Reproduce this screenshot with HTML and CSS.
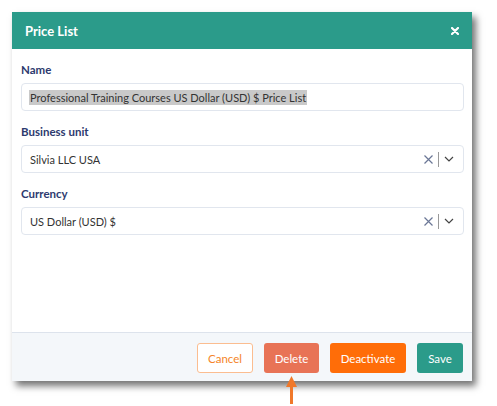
FILE: index.html
```html
<!DOCTYPE html>
<html lang="en">

<head>
    <meta charset="UTF-8">
    <meta name="viewport" content="width=device-width, initial-scale=1.0">
    <link rel="stylesheet" href="styles.css">
    <title>Price List</title>
</head>

<body>
    <div class="dialog">
        <div class="dialog-header">
            <h2>Price List</h2>
            <svg class="close" width="8" height="8" viewBox="0 0 8 8">
                <path d="M1 1 L7 7 M7 1 L1 7" stroke="#fff" stroke-width="2.2" stroke-linecap="round" />
            </svg>
        </div>
        <div class="dialog-body">
            <div class="form-element">
                <label>Name</label>
                <div class="field">
                    <span class="selected">Professional Training Courses US Dollar (USD) $ Price List</span>
                </div>
            </div>
            <div class="form-element">
                <label>Business unit</label>
                <div class="field">
                    <span class="value">Silvia LLC USA</span>
                    <div class="select-icons">
                        <svg width="9" height="9" viewBox="0 0 9 9">
                            <path d="M0.5 0.5 L8.5 8.5 M8.5 0.5 L0.5 8.5" stroke="#6b7796" stroke-width="1.2" />
                        </svg>
                        <span class="divider"></span>
                        <svg width="10" height="6" viewBox="0 0 10 6">
                            <path d="M1 1 L5 5 L9 1" fill="none" stroke="#444" stroke-width="1.2" />
                        </svg>
                    </div>
                </div>
            </div>
            <div class="form-element">
                <label>Currency</label>
                <div class="field">
                    <span class="value">US Dollar (USD) $</span>
                    <div class="select-icons">
                        <svg width="9" height="9" viewBox="0 0 9 9">
                            <path d="M0.5 0.5 L8.5 8.5 M8.5 0.5 L0.5 8.5" stroke="#6b7796" stroke-width="1.2" />
                        </svg>
                        <span class="divider"></span>
                        <svg width="10" height="6" viewBox="0 0 10 6">
                            <path d="M1 1 L5 5 L9 1" fill="none" stroke="#444" stroke-width="1.2" />
                        </svg>
                    </div>
                </div>
            </div>
        </div>
        <div class="dialog-footer">
            <button type="button" class="btn btn-cancel">Cancel</button>
            <button type="button" class="btn btn-delete">Delete</button>
            <button type="button" class="btn btn-deactivate">Deactivate</button>
            <button type="button" class="btn btn-save">Save</button>
        </div>
    </div>

    <!-- pointer under the delete button -->
    <div class="pointer-row">
        <svg class="pointer" width="13" height="28" viewBox="0 0 13 28">
            <path d="M6.5 0 L12 11 L1 11 Z" fill="#f0782a" />
            <rect x="5" y="9" width="3" height="19" fill="#f0782a" />
        </svg>
    </div>
</body>

</html>
```

FILE: styles.css
```css
body {
    margin: 0;
    padding: 12px 12px 0;
    background-color: #fff;
    font-family: 'Lato', sans-serif;
}

.dialog {
    width: 460px;
    height: 369px;
    display: flex;
    flex-direction: column;
    background-color: #fff;
    box-shadow: 4px 5px 7px rgba(0, 0, 0, .55);
}

.dialog-header {
    height: 37px;
    background-color: #2b9b8a;
    display: flex;
    align-items: center;
    justify-content: space-between;
    padding: 0 13px;
}

.dialog-header h2 {
    margin: 0;
    color: #fff;
    font-size: 13px;
    font-weight: 700;
}

.close {
    display: block;
}

.dialog-body {
    flex: 1;
    padding: 14px 8px 0 9px;
}

.form-element {
    margin-bottom: 14px;
}

label {
    display: block;
    font-size: 11.5px;
    line-height: 14px;
    font-weight: 700;
    color: #2d3a6e;
    margin-bottom: 6px;
}

.field {
    height: 28px;
    box-sizing: border-box;
    border: 1px solid #e1e6ee;
    border-radius: 4px;
    display: flex;
    align-items: center;
    padding: 0 9px 0 7px;
    font-size: 11px;
    color: #333;
}

.selected {
    background-color: #c9c9c9;
    padding: 1px 1px;
}

.value {
    flex: 1;
    padding-left: 1px;
}

.select-icons {
    display: flex;
    align-items: center;
}

.select-icons svg {
    display: block;
}

.divider {
    width: 1px;
    height: 15px;
    background-color: #999;
    margin: 0 5px;
}

.dialog-footer {
    border-top: 1px solid #dde3ec;
    background-color: #f4f7fa;
    padding: 10px 9px 8px;
    display: flex;
    justify-content: flex-end;
    gap: 11px;
}

.btn {
    height: 30px;
    border-radius: 3px;
    border: 1px solid transparent;
    font-family: inherit;
    font-size: 11.5px;
    color: #fff;
    padding: 0;
}

.btn-cancel {
    width: 56px;
    background: #fff;
    border-color: #fbbd90;
    color: #f58428;
}

.btn-delete {
    width: 55px;
    background: #e87356;
}

.btn-deactivate {
    width: 76px;
    background: #ff6d08;
}

.btn-save {
    width: 46px;
    background: #2b9b8a;
}

.pointer-row {
    margin-top: -5px;
    padding-left: 273px;
    position: relative;
}

.pointer {
    display: block;
}
```
